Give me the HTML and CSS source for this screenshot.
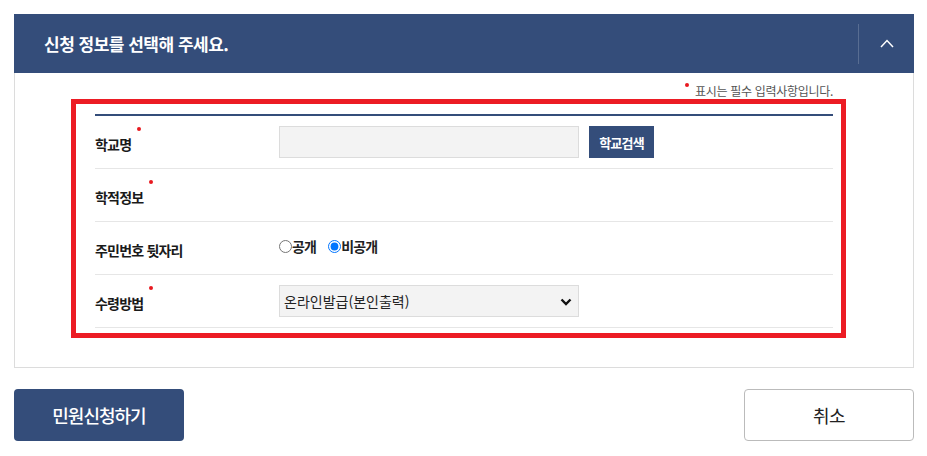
FILE: index.html
```html
<!DOCTYPE html>
<html lang="ko">
<head>
    <meta charset="UTF-8">
    <meta name="viewport" content="width=device-width, initial-scale=1.0">
    <title>민원신청</title>
    <link rel="stylesheet" href="styles.css">
</head>
<body>
    <div class="wrap">
        <section class="panel">
            <div class="panel-head">
                <h2>신청 정보를 선택해 주세요.</h2>
                <button class="toggle" type="button" aria-label="접기">
                    <svg width="14" height="9" viewBox="0 0 14 9"><polyline points="1,8 7,1.5 13,8" fill="none" stroke="#fff" stroke-width="1.5"/></svg>
                </button>
            </div>
            <div class="panel-body">
                <p class="req-note"><span class="dot"></span>표시는 필수 입력사항입니다.</p>

                <div class="highlight">
                    <div class="form-table">
                        <div class="row">
                            <div class="label"><span class="req">학교명</span></div>
                            <div class="field">
                                <input type="text" class="text-input">
                                <button type="button" class="btn-search">학교검색</button>
                            </div>
                        </div>
                        <div class="row">
                            <div class="label"><span class="req">학적정보</span></div>
                            <div class="field"></div>
                        </div>
                        <div class="row">
                            <div class="label"><span>주민번호 뒷자리</span></div>
                            <div class="field radios">
                                <label><input type="radio" name="ssn">공개</label>
                                <label><input type="radio" name="ssn" checked>비공개</label>
                            </div>
                        </div>
                        <div class="row">
                            <div class="label"><span class="req">수령방법</span></div>
                            <div class="field">
                                <div class="select-box">
                                    <select>
                                        <option>온라인발급(본인출력)</option>
                                    </select>
                                    <svg class="caret" width="12" height="8" viewBox="0 0 12 8"><polyline points="1.5,1.5 6,6 10.5,1.5" fill="none" stroke="#111" stroke-width="2.4"/></svg>
                                </div>
                            </div>
                        </div>
                    </div>
                </div>
            </div>
        </section>

        <div class="actions">
            <button type="button" class="btn btn-submit">민원신청하기</button>
            <button type="button" class="btn btn-cancel">취소</button>
        </div>
    </div>
</body>
</html>
```

FILE: styles.css
```css
body {
    margin: 0;
    padding: 14px 13px 14px 14px;
    background: #fff;
    font-family: "Noto Sans CJK KR", "Noto Sans", sans-serif;
    color: #222;
}
.wrap {
    width: 900px;
}
.panel-head {
    display: flex;
    align-items: center;
    height: 59px;
    background-color: #344d7a;
}
.panel-head h2 {
    flex: 1;
    margin: 0;
    padding-left: 30px;
    color: #fff;
    font-size: 17px;
    font-weight: bold;
    letter-spacing: -0.5px;
}
.toggle {
    display: flex;
    align-items: center;
    justify-content: center;
    width: 56px;
    height: 40px;
    padding: 0;
    background: none;
    border: none;
    border-left: 1px solid rgba(255,255,255,0.18);
    cursor: pointer;
}
.panel-body {
    border: 1px solid #dcdcdc;
    border-top: none;
    padding: 9px 80px 29px 80px;
}
.req-note {
    margin: 0;
    text-align: right;
    font-size: 12px;
    line-height: 17px;
    letter-spacing: -0.3px;
    color: #555;
}
.dot {
    display: inline-block;
    width: 4px;
    height: 4px;
    margin-right: 6px;
    border-radius: 50%;
    background: #e8191f;
    vertical-align: 9px;
}
.highlight {
    margin: 0 -13px 0 -24px;
    padding: 10px 8px 5px 19px;
    border: 5px solid #ec1c24;
}
.form-table {
    border-top: 2px solid #344d7a;
}
.row {
    display: flex;
    align-items: center;
    height: 52px;
    border-bottom: 1px solid #e6e6e6;
}
.label {
    width: 184px;
    padding-top: 4px;
    font-size: 14px;
    font-weight: bold;
    line-height: 20px;
    letter-spacing: -0.8px;
    color: #1a1a1a;
}
.label span {
    position: relative;
}
.req::after {
    content: "";
    position: absolute;
    top: -7px;
    right: -10px;
    width: 4px;
    height: 4px;
    border-radius: 50%;
    background: #e8191f;
}
.field {
    display: flex;
    align-items: center;
    gap: 10px;
}
.text-input {
    box-sizing: border-box;
    width: 300px;
    height: 32px;
    margin: 0;
    border: 1px solid #dcdcdc;
    background: #f3f3f3;
}
.btn-search {
    width: 65px;
    height: 32px;
    padding: 0;
    border: none;
    background-color: #344d7a;
    color: #fff;
    font-family: inherit;
    font-size: 13px;
    font-weight: bold;
    letter-spacing: -0.8px;
}
.radios {
    gap: 12px;
    padding-bottom: 4px;
    font-size: 14px;
    font-weight: bold;
    letter-spacing: -0.8px;
}
.radios label {
    display: flex;
    align-items: center;
}
.radios input {
    width: 13px;
    height: 13px;
    margin: 0;
}
.select-box {
    position: relative;
}
.select-box select {
    -webkit-appearance: none;
    appearance: none;
    box-sizing: border-box;
    width: 300px;
    height: 32px;
    margin: 0;
    padding: 0 4px;
    border: 1px solid #dcdcdc;
    border-radius: 0;
    background: #f3f3f3;
    font-family: inherit;
    font-size: 14px;
    color: #222;
}
.caret {
    position: absolute;
    right: 7px;
    top: 13px;
    pointer-events: none;
}
.actions {
    display: flex;
    justify-content: space-between;
    margin-top: 21px;
}
.btn {
    width: 170px;
    height: 52px;
    border-radius: 4px;
    font-family: inherit;
    font-size: 18px;
    cursor: pointer;
}
.btn-submit {
    border: none;
    background-color: #344d7a;
    color: #fff;
    font-weight: 500;
    letter-spacing: -1px;
}
.btn-cancel {
    border: 1px solid #bbb;
    background: #fff;
    color: #222;
    letter-spacing: -0.5px;
}
```
